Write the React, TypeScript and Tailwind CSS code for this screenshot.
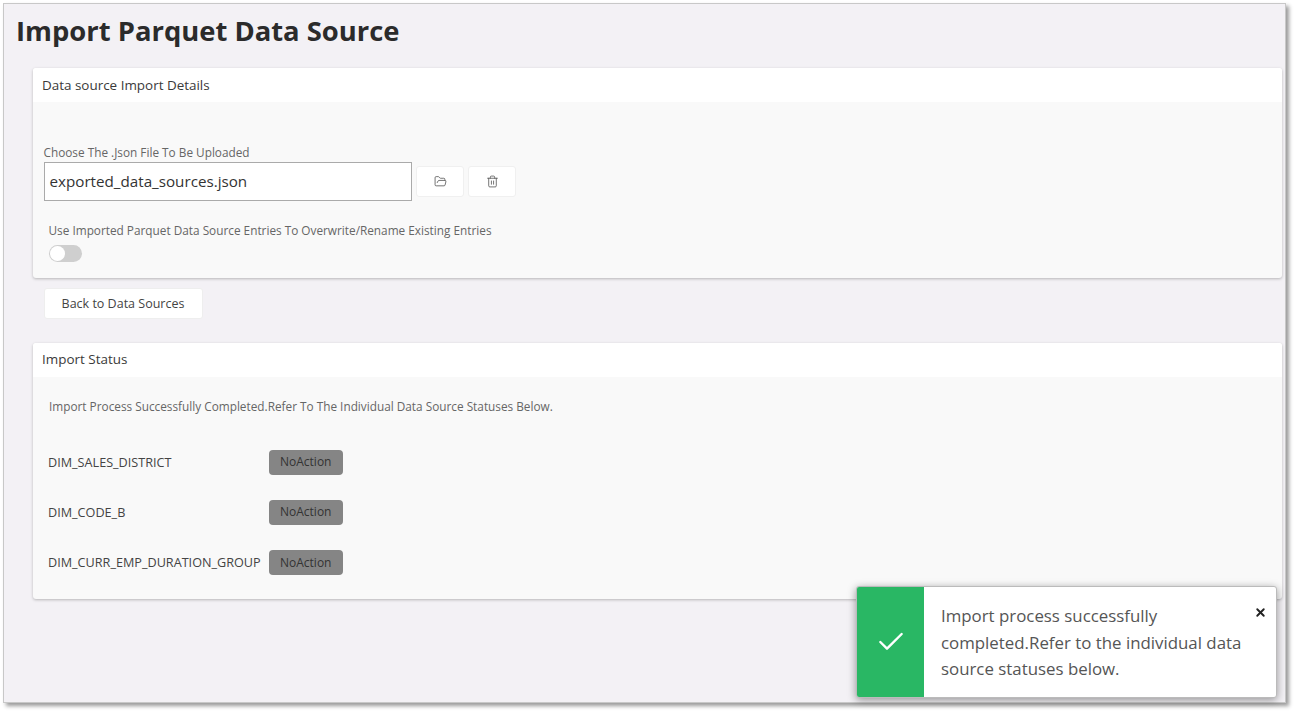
import { Check, FolderOpen, Trash2, X } from "lucide-react";

const rows = ["DIM_SALES_DISTRICT", "DIM_CODE_B", "DIM_CURR_EMP_DURATION_GROUP"];

function IconButton({ children }: { children: React.ReactNode }) {
  return (
    <button className="w-[48px] h-[31px] bg-white rounded-[3px] border border-[#f0f0f0] flex items-center justify-center text-[#555]">
      {children}
    </button>
  );
}

function Card({ title, titleClass, children }: { title: string; titleClass?: string; children: React.ReactNode }) {
  return (
    <section className="bg-[#f9f9f9] rounded-[3px] shadow-[0_1px_3px_rgba(0,0,0,0.25)]">
      <h2 className={"h-[34px] bg-white rounded-t-[3px] px-[9px] flex items-center text-[13.45px] font-normal text-[#3a3a3a] " + (titleClass ?? "")}>{title}</h2>
      {children}
    </section>
  );
}

export default function App() {
  return (
    <div className="w-[1294px] h-[712px] bg-white p-[3px] overflow-hidden font-['Open_Sans',sans-serif]">
      <main className="relative w-[1283px] h-[700px] bg-[#f3f1f5] border border-[#c8c8c8] shadow-[3px_3px_4px_rgba(0,0,0,0.4)] pl-[29px] pr-[3px]">
        <h1 className="-ml-[17px] pt-[8px] h-[64px] text-[27.4px] leading-[38px] font-bold text-[#2b2b2b]">Import Parquet Data Source</h1>
        <Card title="Data source Import Details">
          <div className="h-[176px] pt-[43px] pl-[10.5px]">
            <label className="block text-[11.8px] leading-[15px] text-[#666]">Choose The .Json File To Be Uploaded</label>
            <div className="flex items-center gap-[4px] mt-[2px]">
              <div className="w-[368.5px] h-[39px] bg-white border border-[#aaa] pl-[5px] flex items-center text-[15.2px] text-[#333]">exported_data_sources.json</div>
              <IconButton><FolderOpen size={13} strokeWidth={1.5} /></IconButton>
              <IconButton><Trash2 size={13} strokeWidth={1.5} /></IconButton>
            </div>
            <p className="ml-[5px] mt-[21px] text-[11.8px] leading-[17px] text-[#666]">Use Imported Parquet Data Source Entries To Overwrite/Rename Existing Entries</p>
            <div className="ml-[5px] mt-[6px] w-[33px] h-[17px] rounded-full bg-[#cfcfcf] p-[1px]">
              <div className="w-[15px] h-[15px] rounded-full bg-white" />
            </div>
          </div>
        </Card>
        <button className="ml-[10.5px] mt-[10px] mb-[24px] block w-[159px] h-[31px] pt-[1px] bg-white rounded-[3px] border border-[#eee] text-[12.5px] text-[#444]">Back to Data Sources</button>
        <Card title="Import Status" titleClass="pb-[2px]">
          <div className="h-[222px] pt-[21px] pl-[16px]">
            <p className="text-[11.8px] leading-[17px] text-[#666]">Import Process Successfully Completed.Refer To The Individual Data Source Statuses Below.</p>
            <div className="mt-[34.6px] flex flex-col gap-[25.4px]">
              {rows.map((r) => (
                <div key={r} className="flex items-center h-[25px] -ml-[1px]">
                  <span className="w-[221px] text-[12.65px] text-[#444]">{r}</span>
                  <span className="w-[73.5px] h-[25px] rounded-[4px] bg-[#858585] flex items-center justify-center text-[12px] text-[#333]">NoAction</span>
                </div>
              ))}
            </div>
          </div>
        </Card>
        <aside className="absolute left-[852px] top-[582px] w-[421px] h-[112px] flex bg-white rounded-[3px] border border-[#bbb] shadow-[0_2px_8px_rgba(0,0,0,0.4)] overflow-hidden">
          <div className="w-[67px] bg-[#29b764] flex items-center justify-center text-white">
            <Check size={32} strokeWidth={1.8} />
          </div>
          <p className="w-[335px] pl-[17px] pt-[16px] text-[16.85px] leading-[26.5px] text-[#555]">Import process successfully completed.Refer to the individual data source statuses below.</p>
          <X size={13} strokeWidth={3.5} className="absolute right-[9px] top-[19px] text-[#222]" />
        </aside>
      </main>
    </div>
  );
}
